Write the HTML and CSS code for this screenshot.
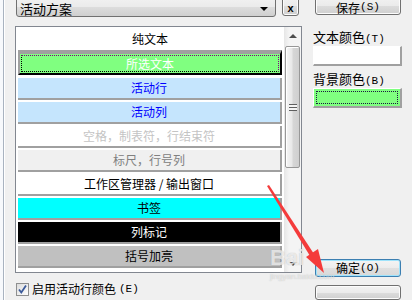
FILE: index.html
```html
<!DOCTYPE html>
<html lang="zh-CN">
<head>
  <meta charset="UTF-8" />
  <title>颜色方案</title>
  <link rel="stylesheet" href="styles.css">
</head>
<body>
  <div class="dialog">
    <div class="main">
      <div class="scheme-row">
        <div class="combo"><span>活动方案</span><span class="combo-arrow"></span></div>
        <button class="btn btn-x">x</button>
      </div>

      <div class="listbox">
        <ul class="items">
          <li class="item plain">纯文本</li>
          <li class="item selected">所选文本</li>
          <li class="item active">活动行</li>
          <li class="item active">活动列</li>
          <li class="item space">空格，制表符，行结束符</li>
          <li class="item ruler">标尺，行号列</li>
          <li class="item">工作区管理器 / 输出窗口</li>
          <li class="item bookmark">书签</li>
          <li class="item colmark">列标记</li>
          <li class="item brace">括号加亮</li>
        </ul>
        <div class="scrollbar">
          <div class="sb-btn"><span class="tri-up"></span></div>
          <div class="thumb"><span class="grip"></span></div>
          <div class="sb-track"></div>
          <div class="sb-btn"><span class="tri-down"></span></div>
        </div>
      </div>

      <label class="check">
        <span class="check-box">
          <svg width="11" height="11" viewBox="0 0 11 11"><path d="M2 5.5 L4.3 8.5 L9 1.5" fill="none" stroke="#3b5a9a" stroke-width="1.8"/></svg>
        </span>
        启用活动行颜色<span class="key">(E)</span>
      </label>
    </div>

    <div class="side">
      <button class="btn btn-save">保存<span class="key">(S)</span></button>
      <div class="label">文本颜色<span class="key">(T)</span></div>
      <div class="swatch"></div>
      <div class="label">背景颜色<span class="key">(B)</span></div>
      <div class="swatch green"></div>
      <button class="btn btn-ok">确定<span class="key">(O)</span></button>
      <button class="btn btn-cancel"></button>
    </div>

    <!-- screenshot annotation -->
    <svg class="arrow" width="412" height="300" viewBox="0 0 412 300">
      <path d="M267 186 L269 185 L314 254 L310 256 Z" fill="#f43b3b"/>
      <polygon points="324,273 318,249 306,257" fill="#f43b3b"/>
    </svg>
    <div class="watermark">Bai<span class="wm-site">jingyan.baidu.com</span></div>
  </div>
</body>
</html>
```

FILE: styles.css
```css
* { box-sizing: border-box; }
body {
  margin: 0;
  background: #f0f0f0;
  font-family: "Noto Sans CJK SC", "Liberation Sans", sans-serif;
  font-size: 12px;
  color: #000;
  overflow: hidden;
}
.dialog {
  position: relative;
  display: flex;
  height: 300px;
  padding-left: 15px;
  background: linear-gradient(to right, #f7f9fc 0 3px, #a9b3c0 3px 4px, #ffffff 4px 5px, #f0f0f0 5px);
}
.main {
  width: 287px;
  flex-shrink: 0;
}
.key {
  font-family: "Liberation Mono", monospace;
  font-size: 11px;
}

/* buttons and combo */
.btn {
  display: flex;
  align-items: center;
  justify-content: center;
  padding: 0;
  font: inherit;
  color: #000;
  border: 1px solid #707070;
  border-radius: 3px;
  background: linear-gradient(#f2f2f2 0%, #ebebeb 50%, #dddddd 51%, #cfcfcf 100%);
  box-shadow: inset 0 0 0 1px #fcfcfc;
}
.scheme-row {
  display: flex;
  margin-top: -4px;
  height: 21px;
}
.combo {
  margin-left: 1px;
  width: 260px;
  height: 21px;
  display: flex;
  align-items: center;
  justify-content: space-between;
  padding: 4px 7px 0 3px;
  border: 1px solid #707070;
  border-radius: 3px;
  background: linear-gradient(#f2f2f2 0%, #ebebeb 50%, #dddddd 51%, #cfcfcf 100%);
  font-size: 13px;
}
.combo-arrow {
  width: 0;
  height: 0;
  border-left: 4px solid transparent;
  border-right: 4px solid transparent;
  border-top: 4px solid #000;
}
.btn-x {
  margin-left: 6px;
  width: 17px;
  height: 20px;
  padding-top: 3px;
  font-family: "Liberation Sans", sans-serif;
  font-size: 11px;
  font-weight: bold;
}

/* list */
.listbox {
  margin-top: 9px;
  height: 247px;
  display: flex;
  border: 1px solid #828790;
  background: #fff;
}
.items {
  list-style: none;
  margin: 0;
  padding: 1px 2px 0 2px;
  width: 268px;
}
.item {
  height: 22px;
  margin-bottom: 2px;
  line-height: 20px;
  text-align: center;
  border-right: 2px solid #a0a0a0;
  border-bottom: 2px solid #a0a0a0;
  white-space: nowrap;
  overflow: hidden;
}
.item.plain {
  height: 22px;
  line-height: 22px;
  margin-bottom: 0;
  border: none;
}
.item.selected {
  position: relative;
  height: 25px;
  margin-bottom: 3px;
  line-height: 19px;
  color: #fff;
  background: #80ff80;
  border-top: 4px solid #a0a0a0;
  border-left: 2px solid #a0a0a0;
  border-right: 2px solid #000;
  border-bottom: 2px solid #000;
}
.item.selected::after {
  content: "";
  position: absolute;
  top: 1px;
  left: 1px;
  right: 1px;
  bottom: 1px;
  border-top: 1px dotted #800080;
  border-right: 1px dotted #800080;
  border-bottom: 1px dotted #000;
  border-left: 1px dotted #000;
}
.item.active { background: #c5e5fd; color: #0000ff; }
.item.space { color: #c4c4c4; }
.item.ruler { background: #f0f0f0; color: #808080; }
.item.bookmark { background: #00ffff; }
.item.colmark { background: #000; color: #fff; }
.item.brace { background: #c0c0c0; }

/* scrollbar */
.scrollbar {
  width: 17px;
  display: flex;
  flex-direction: column;
  background: linear-gradient(to right, #e6e6e6, #f4f4f4 30%, #f4f4f4);
}
.sb-btn {
  height: 17px;
  display: flex;
  align-items: center;
  justify-content: center;
}
.tri-up, .tri-down {
  width: 0;
  height: 0;
  border-left: 4px solid transparent;
  border-right: 4px solid transparent;
}
.tri-up { border-bottom: 4px solid #4d4d4d; }
.tri-down { border-top: 4px solid #4d4d4d; }
.thumb {
  margin: 2px 1px 0 1px;
  height: 122px;
  display: flex;
  align-items: center;
  justify-content: center;
  border: 1px solid #979797;
  border-radius: 2px;
  background: linear-gradient(to right, #f6f6f6, #e8e8e8 45%, #d6d6d6 55%, #cfcfcf);
  box-shadow: inset 1px 1px 0 #fff;
}
.grip {
  width: 8px;
  height: 7px;
  background: repeating-linear-gradient(#5f5f5f 0 1px, #f4f4f4 1px 3px);
}
.sb-track { flex: 1; }

/* checkbox */
.check {
  margin-top: 9px;
  margin-left: 1px;
  display: flex;
  align-items: center;
  gap: 3px;
  height: 14px;
  line-height: 14px;
}
.check-box {
  width: 13px;
  height: 13px;
  display: flex;
  align-items: center;
  justify-content: center;
  border: 1px solid #8e8f8f;
  background: linear-gradient(135deg, #dcdcdc, #fefefe);
}

/* right column */
.side {
  width: 89px;
  margin-left: 11px;
  display: flex;
  flex-direction: column;
}
.btn-save {
  margin: -4px 1px 0 2px;
  height: 19px;
  padding-top: 3px;
}
.label {
  margin-top: 15px;
  line-height: 14px;
  height: 14px;
  white-space: nowrap;
  font-size: 13px;
}
.swatch + .label { margin-top: 6px; }
.swatch {
  margin-top: 2px;
  height: 26px;
  background: #fff;
  border-top: 1px solid #fff;
  border-left: 1px solid #fff;
  border-right: 2px solid #a0a0a0;
  border-bottom: 2px solid #a0a0a0;
}
.swatch.green {
  position: relative;
  background: #80ff80;
}
.swatch.green::after {
  content: "";
  position: absolute;
  top: 2px;
  left: 2px;
  right: 2px;
  bottom: 2px;
  border: 1px dotted #1a1a40;
}
.btn-ok {
  margin: 151px 1px 0 2px;
  height: 18px;
  border-color: #3c7fb1;
  box-shadow: inset 0 0 0 1px #9fe3fb;
  background: linear-gradient(#f4f4f4 0%, #ececec 50%, #e0e0e0 51%, #d8d8d8 100%);
}
.btn-cancel {
  margin: 8px 1px 0 2px;
  height: 20px;
}

/* annotation overlay */
.arrow {
  position: absolute;
  left: 0;
  top: 0;
  pointer-events: none;
}
.watermark {
  position: absolute;
  left: 270px;
  top: 246px;
  font-family: "Liberation Sans", sans-serif;
  font-size: 22px;
  font-weight: bold;
  color: rgba(255, 255, 255, 0.7);
  text-shadow: 0 0 1px rgba(120, 120, 120, 0.5);
  line-height: 24px;
}
.wm-site {
  display: block;
  margin-top: 2px;
  font-size: 8px;
  font-weight: normal;
  line-height: 9px;
  color: rgba(255, 255, 255, 0.6);
}
```
